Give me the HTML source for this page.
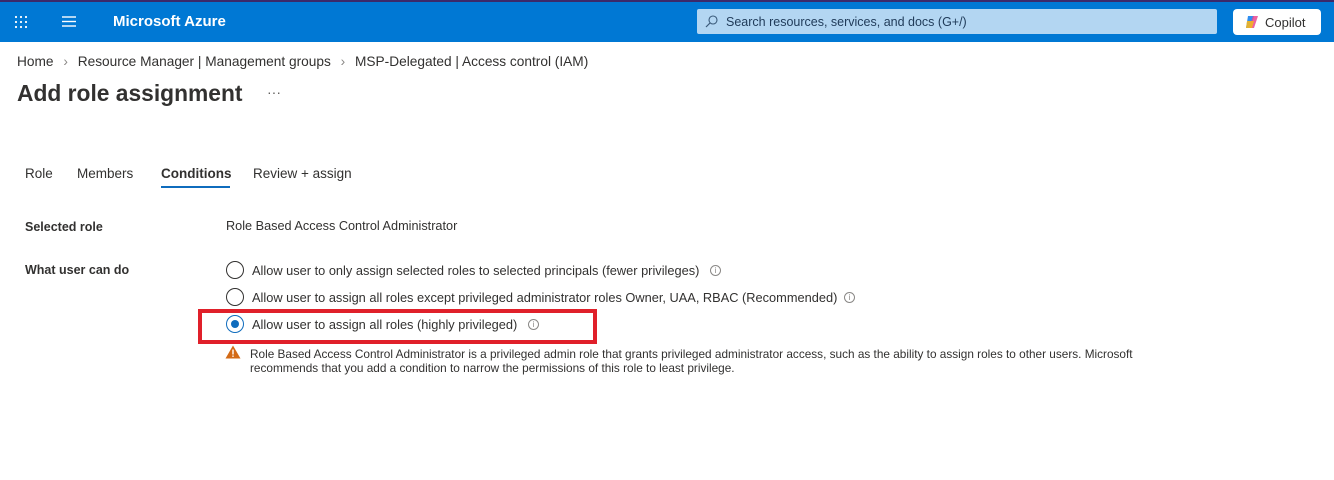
<!DOCTYPE html>
<html><head><meta charset="utf-8"><style>
*{margin:0;padding:0;box-sizing:border-box}
body{width:1334px;height:480px;background:#fff;font-family:"Liberation Sans",sans-serif;color:#323130;position:relative;overflow:hidden}
.a{position:absolute;white-space:nowrap}
.top{position:absolute;left:0;top:0;width:1334px;height:2px;background:#3b2a6b}
.hdr{position:absolute;left:0;top:2px;width:1334px;height:40px;background:#0078d4}
.radio{position:absolute;width:18px;height:18px;border:1.5px solid #323130;border-radius:50%;background:#fff}
.info{position:absolute;width:11px;height:11px;border:1px solid #8a8886;border-radius:50%;font-size:8px;color:#8a8886;text-align:center;line-height:9px}
</style></head><body>
<div class="top"></div>
<div class="hdr"></div>
<svg class="a" style="left:14px;top:15px" width="14" height="14"><g fill="#fff"><circle cx="2" cy="2" r="1.1"/><circle cx="7" cy="2" r="1.1"/><circle cx="12" cy="2" r="1.1"/><circle cx="2" cy="7" r="1.1"/><circle cx="7" cy="7" r="1.1"/><circle cx="12" cy="7" r="1.1"/><circle cx="2" cy="12" r="1.1"/><circle cx="7" cy="12" r="1.1"/><circle cx="12" cy="12" r="1.1"/></g></svg>
<svg class="a" style="left:62px;top:16px" width="14" height="11"><g stroke="#fff" stroke-width="1.4"><line x1="0" y1="1" x2="14" y2="1"/><line x1="0" y1="5.5" x2="14" y2="5.5"/><line x1="0" y1="10" x2="14" y2="10"/></g></svg>
<div class="a" style="left:113px;top:13px;font-size:15px;font-weight:bold;color:#fff">Microsoft Azure</div>
<div class="a" style="left:697px;top:9px;width:520px;height:25px;background:#b3d6f2;border-radius:2px"></div>
<svg class="a" style="left:705px;top:15px" width="13" height="13"><circle cx="8" cy="5" r="4" fill="none" stroke="#3a5a7a" stroke-width="1.1"/><line x1="5" y1="8" x2="1" y2="12" stroke="#3a5a7a" stroke-width="1.2"/></svg>
<div class="a" style="left:726px;top:15px;font-size:12.5px;color:#1f3a58">Search resources, services, and docs (G+/)</div>
<div class="a" style="left:1233px;top:9px;width:88px;height:26px;background:#fff;border-radius:4px"></div>
<svg class="a" style="left:1245px;top:15px" width="14" height="14"><path d="M3 1h6l-3 12H1z" fill="#2f8ef0"/><path d="M8 1h5l-4 12H4z" fill="#e9478f" opacity=".85"/><path d="M2 6h7l-2 7H1z" fill="#f5b51f" opacity=".9"/></svg>
<div class="a" style="left:1265px;top:15px;font-size:13px;color:#323130">Copilot</div>
<div class="a" style="left:17px;top:54px;font-size:13.7px;color:#323130">Home <span style="color:#8a8886;margin:0 6px">›</span> Resource Manager | Management groups <span style="color:#8a8886;margin:0 6px">›</span> MSP-Delegated | Access control (IAM)</div>
<div class="a" style="left:17px;top:80px;font-size:22.8px;font-weight:bold;color:#323130">Add role assignment</div>
<div class="a" style="left:267px;top:84px;font-size:14px;color:#605e5c">···</div>
<div class="a" style="left:25px;top:166px;font-size:13.5px">Role</div>
<div class="a" style="left:77px;top:166px;font-size:13.5px">Members</div>
<div class="a" style="left:161px;top:166px;font-size:13.5px;font-weight:bold">Conditions</div>
<div class="a" style="left:161px;top:186px;width:69px;height:2px;background:#0f6cbd"></div>
<div class="a" style="left:253px;top:166px;font-size:13.5px">Review + assign</div>
<div class="a" style="left:25px;top:220px;font-size:12.5px;font-weight:bold">Selected role</div>
<div class="a" style="left:226px;top:219px;font-size:12.7px">Role Based Access Control Administrator</div>
<div class="a" style="left:25px;top:263px;font-size:12.5px;font-weight:bold">What user can do</div>
<div class="radio" style="left:226px;top:261px"></div>
<div class="a" style="left:252px;top:263px;font-size:12.8px">Allow user to only assign selected roles to selected principals (fewer privileges)</div>
<div class="info" style="left:710px;top:265px">i</div>
<div class="radio" style="left:226px;top:288px"></div>
<div class="a" style="left:252px;top:290px;font-size:12.8px">Allow user to assign all roles except privileged administrator roles Owner, UAA, RBAC (Recommended)</div>
<div class="info" style="left:844px;top:292px">i</div>
<div class="a" style="left:198px;top:309px;width:399px;height:35px;border:4px solid #e0202a"></div>
<div class="radio" style="left:226px;top:315px;border-color:#0f6cbd"><div style="position:absolute;left:3.5px;top:3.5px;width:8px;height:8px;border-radius:50%;background:#0f6cbd"></div></div>
<div class="a" style="left:252px;top:317px;font-size:12.8px">Allow user to assign all roles (highly privileged)</div>
<div class="info" style="left:528px;top:319px">i</div>
<svg class="a" style="left:225px;top:345px" width="16" height="14"><path d="M8 0.5L15.5 13.5H0.5z" fill="#d36a16"/><rect x="7.3" y="4.5" width="1.4" height="5" fill="#fff"/><rect x="7.3" y="10.5" width="1.4" height="1.4" fill="#fff"/></svg>
<div class="a" style="left:250px;top:347px;font-size:11.8px;line-height:14px;white-space:normal;width:905px">Role Based Access Control Administrator is a privileged admin role that grants privileged administrator access, such as the ability to assign roles to other users. Microsoft recommends that you add a condition to narrow the permissions of this role to least privilege.</div>
</body></html>
